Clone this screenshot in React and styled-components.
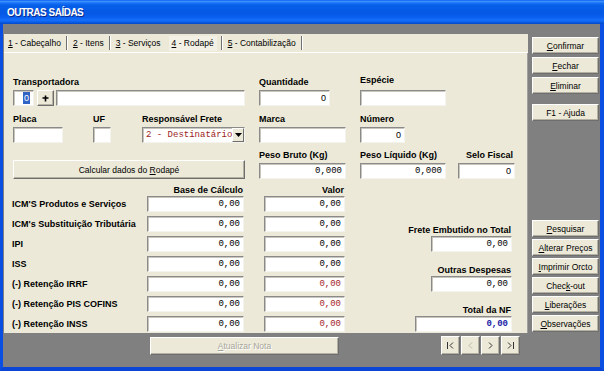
import React from 'react'
import styled, { createGlobalStyle } from 'styled-components'

const Global = createGlobalStyle`
  html, body { margin: 0; padding: 0; background: #808080; }
  * { box-sizing: border-box; }
`

const Window = styled.div`
  width: 604px;
  height: 371px;
  display: flex;
  flex-direction: column;
  font-family: "Liberation Sans", Arial, sans-serif;
  color: #000;
  overflow: hidden;
`

const TitleBar = styled.div`
  height: 24px;
  flex: none;
  display: flex;
  align-items: center;
  padding-left: 7px;
  background: linear-gradient(to bottom, #0a5ef0 0%, #3d92ff 6%, #1a74f6 12%, #065fe8 22%, #0558e4 55%, #0a5ff0 72%, #1670fb 84%, #0a5ee8 92%, #0447c8 100%);
  color: #fff;
  font-weight: 700;
  font-size: 10px;
  letter-spacing: -0.5px;
  text-shadow: 1px 1px 0 #0a2a8a;
`

const Frame = styled.div`
  flex: 1;
  display: flex;
  flex-direction: column;
  background: #808080;
  border-left: 3px solid #0b4ee2;
  border-right: 4px solid #0b4ee2;
  border-bottom: 4px solid #0a45d6;
  padding-top: 10px;
`

const TopArea = styled.div`
  display: flex;
  gap: 4px;
  padding-left: 1px;
`

const LeftCol = styled.div`
  width: 524px;
  display: flex;
  flex-direction: column;
`

const TabStrip = styled.div`
  height: 19px;
  background: #ece9d8;
  border-bottom: 1px solid #ffffff;
  display: flex;
  align-items: center;
  padding-left: 1px;
  font-size: 8.5px;
`

const Tab = styled.div`
  padding: 0 3px;
  height: 15px;
  line-height: 15px;
  white-space: pre;
  background: ${p => (p.$active ? '#f3f1e6' : 'transparent')};
  margin: ${p => (p.$active ? '0 2px 0 5px' : '0')};
  u { text-decoration: underline; }
`

const TabSep = styled.div`
  width: 2px;
  height: 14px;
  margin: 0 2px;
  border-left: 1px solid #707070;
  border-right: 1px solid #ffffff;
`

const Panel = styled.div`
  height: 280px;
  background: #ece9d8;
  border-right: 1px solid #a0a0a0;
  padding: 21px 0 0 9px;
  overflow: hidden;
`

const Row = styled.div`
  display: flex;
  align-items: flex-end;
  margin-top: ${p => p.$mt || 0}px;
`

const Cell = styled.div`
  width: ${p => p.$w}px;
  margin-left: ${p => p.$ml || 0}px;
  flex: none;
  display: flex;
  flex-direction: column;
  gap: 2px;
  align-items: ${p => (p.$right ? 'flex-end' : 'stretch')};
`

const Label = styled.div`
  height: 12px;
  line-height: 12px;
  font-size: 9px;
  font-weight: 700;
  white-space: nowrap;
  padding-right: ${p => (p.$pr ? p.$pr : 0)}px;
`

const Box = styled.div`
  width: ${p => (p.$w ? `${p.$w}px` : '100%')};
  height: 16px;
  flex: none;
  background: #fff;
  border: 1px solid;
  border-color: #8a8a8a #f4f3ee #f4f3ee #8a8a8a;
  box-shadow: inset 1px 1px 0 #c8c6bc;
  display: flex;
  align-items: center;
  justify-content: flex-end;
  padding-right: 3px;
  margin-top: ${p => p.$mt || 0}px;
  font-family: ${p => (p.$mono ? '"Liberation Mono", "Courier New", monospace' : '"Liberation Sans", Arial, sans-serif')};
  font-size: 9px;
  font-weight: ${p => (p.$bold ? 700 : 400)};
  color: ${p => p.$color || '#000'};
  white-space: nowrap;
  overflow: hidden;
`

const Selected = styled.span`
  background: #3163c5;
  color: #fff;
  padding: 0 1px;
  line-height: 12px;
`

const InlineRow = styled.div`
  display: flex;
  align-items: center;
  gap: ${p => p.$gap || 0}px;
`

const RaisedButton = styled.div`
  width: ${p => (p.$w ? `${p.$w}px` : '100%')};
  height: ${p => p.$h || 17}px;
  flex: none;
  background: #ece9d8;
  border: 1px solid;
  border-color: #ffffff #6e6e6e #6e6e6e #ffffff;
  box-shadow: inset -1px -1px 0 #b4b1a3;
  display: flex;
  align-items: center;
  justify-content: center;
  font-size: 8.5px;
  white-space: pre;
  color: ${p => (p.$disabled ? '#a7a59a' : '#000')};
  text-shadow: ${p => (p.$disabled ? '1px 1px 0 #ffffff' : 'none')};
  u { text-decoration: underline; }
`

const Select = styled.div`
  width: 103px;
  height: 16px;
  background: #fff;
  border: 1px solid;
  border-color: #8a8a8a #f4f3ee #f4f3ee #8a8a8a;
  box-shadow: inset 1px 1px 0 #c8c6bc;
  display: flex;
  align-items: center;
  justify-content: space-between;
  padding-left: 3px;
  font-family: "Liberation Mono", "Courier New", monospace;
  font-size: 9px;
  color: #9b1c1c;
  white-space: nowrap;
`

const DropButton = styled.div`
  width: 13px;
  height: 14px;
  background: #ece9d8;
  border: 1px solid;
  border-color: #ffffff #6e6e6e #6e6e6e #ffffff;
  display: flex;
  align-items: center;
  justify-content: center;
`

const Grid = styled.div`
  display: grid;
  grid-template-columns: 135px 97px 20px 81px 70px 97px;
  grid-template-rows: 13px repeat(7, 20px);
  margin-top: 4px;
  margin-left: -1px;
`

const GridLabel = styled.div`
  grid-column: ${p => p.$col};
  grid-row: ${p => p.$row};
  align-self: ${p => (p.$end ? 'end' : 'start')};
  justify-self: ${p => (p.$right ? 'end' : 'start')};
  height: ${p => (p.$end ? 12 : 16)}px;
  line-height: ${p => (p.$end ? 12 : 16)}px;
  font-size: 9px;
  font-weight: 700;
  white-space: nowrap;
  padding-right: ${p => (p.$right ? 1 : 0)}px;
`

const GridBox = styled(Box)`
  grid-column: ${p => p.$col};
  grid-row: ${p => p.$row};
  justify-self: end;
`

const RightCol = styled.div`
  width: 67px;
  height: 299px;
  display: flex;
  flex-direction: column;
  padding: 3px 0 1px;
`

const ButtonGroup = styled.div`
  display: flex;
  flex-direction: column;
  gap: ${p => p.$gap}px;
  margin-top: ${p => (p.$auto ? 'auto' : `${p.$mt || 0}px`)};
`

const BottomBar = styled.div`
  display: flex;
  align-items: center;
  margin-top: 3px;
  padding-left: 147px;
`

const NavGroup = styled.div`
  display: flex;
  gap: 1px;
  margin-left: 102px;
`

const NavButton = styled(RaisedButton)`
  width: 19px;
  height: 19px;
`

function NavIcon({ kind, disabled }) {
  const c = disabled ? '#b9b7ab' : '#333'
  return (
    <svg width="9" height="9" viewBox="0 0 9 9">
      {kind === 'first' && <path d="M1.5 1 V8 M7 1.5 L4 4.5 L7 7.5" stroke={c} fill="none" strokeWidth="1" />}
      {kind === 'prev' && <path d="M6 1.5 L3 4.5 L6 7.5" stroke={c} fill="none" strokeWidth="1" />}
      {kind === 'next' && <path d="M3 1.5 L6 4.5 L3 7.5" stroke={c} fill="none" strokeWidth="1" />}
      {kind === 'last' && <path d="M2 1.5 L5 4.5 L2 7.5 M7.5 1 V8" stroke={c} fill="none" strokeWidth="1" />}
    </svg>
  )
}

const tabs = [
  { n: '1', t: ' - Cabeçalho' },
  { n: '2', t: ' - Itens' },
  { n: '3', t: ' - Serviços' },
  { n: '4', t: ' - Rodapé', active: true },
  { n: '5', t: ' - Contabilização' },
]

const impostos = [
  { label: "ICM'S Produtos e Serviços" },
  { label: "ICM's Substituição Tributária" },
  { label: 'IPI' },
  { label: 'ISS' },
  { label: '(-) Retenção IRRF', red: true },
  { label: '(-) Retenção PIS COFINS', red: true },
  { label: '(-) Retenção INSS', red: true },
]

function Btn({ pre = '', u, post = '', ...rest }) {
  return (
    <RaisedButton {...rest}>
      <span>
        {pre}
        {u && <u>{u}</u>}
        {post}
      </span>
    </RaisedButton>
  )
}

export default function App() {
  return (
    <Window>
      <Global />
      <TitleBar>OUTRAS SAÍDAS</TitleBar>
      <Frame>
        <TopArea>
          <LeftCol>
            <TabStrip>
              {tabs.map((tab, i) => (
                <React.Fragment key={tab.n}>
                  <Tab $active={tab.active}>
                    <u>{tab.n}</u>
                    {tab.t}
                  </Tab>
                  {!(tabs[i + 1] && tabs[i + 1].active) && !tab.active ? <TabSep /> : null}
                  {tab.active ? <TabSep /> : null}
                </React.Fragment>
              ))}
            </TabStrip>
            <Panel>
              <Row>
                <Cell $w={232}>
                  <Label>Transportadora</Label>
                  <InlineRow>
                    <Box $w={21}>
                      <Selected>0</Selected>
                    </Box>
                    <RaisedButton $w={17} $h={16} style={{ marginLeft: 3 }}>
                      <svg width="7" height="7" viewBox="0 0 7 7">
                        <path d="M3.5 0.5 V6.5 M0.5 3 H6.5" stroke="#000" strokeWidth="1.6" />
                      </svg>
                    </RaisedButton>
                    <Box $w={189} style={{ marginLeft: 2 }} />
                  </InlineRow>
                </Cell>
                <Cell $w={87} $ml={14}>
                  <Label>Quantidade</Label>
                  <Box $w={71}>0</Box>
                </Cell>
                <Cell $w={86} $ml={14}>
                  <Label>Espécie</Label>
                  <Box $w={86} $mt={2} />
                </Cell>
              </Row>

              <Row $mt={7}>
                <Cell $w={232}>
                  <InlineRow $gap={0} style={{ alignItems: 'flex-end' }}>
                    <Cell $w={50}>
                      <Label>Placa</Label>
                      <Box />
                    </Cell>
                    <Cell $w={18} $ml={30}>
                      <Label>UF</Label>
                      <Box />
                    </Cell>
                    <Cell $w={103} $ml={31}>
                      <Label>Responsável Frete</Label>
                      <Select>
                        2 - Destinatário
                        <DropButton>
                          <svg width="7" height="4" viewBox="0 0 7 4">
                            <path d="M0 0 H7 L3.5 4 Z" fill="#000" />
                          </svg>
                        </DropButton>
                      </Select>
                    </Cell>
                  </InlineRow>
                </Cell>
                <Cell $w={87} $ml={14}>
                  <Label>Marca</Label>
                  <Box />
                </Cell>
                <Cell $w={86} $ml={14}>
                  <Label>Número</Label>
                  <Box $w={45}>0</Box>
                </Cell>
              </Row>

              <Row $mt={6}>
                <Cell $w={232}>
                  <Btn $h={19} pre="Calcular dados do " u="R" post="odapé" />
                </Cell>
                <Cell $w={87} $ml={14}>
                  <Label>Peso Bruto (Kg)</Label>
                  <Box $mono>0,000</Box>
                </Cell>
                <Cell $w={86} $ml={14}>
                  <Label>Peso Líquido (Kg)</Label>
                  <Box $mono>0,000</Box>
                </Cell>
                <Cell $w={57} $ml={12} $right>
                  <Label $pr={2}>Selo Fiscal</Label>
                  <Box $w={57}>0</Box>
                </Cell>
              </Row>

              <Grid>
                <GridLabel $col={2} $row={1} $right $end>Base de Cálculo</GridLabel>
                <GridLabel $col={4} $row={1} $right $end>Valor</GridLabel>
                {impostos.map((imp, i) => (
                  <React.Fragment key={imp.label}>
                    <GridLabel $col={1} $row={i + 2}>{imp.label}</GridLabel>
                    <GridBox $col={2} $row={i + 2} $w={97} $mono>0,00</GridBox>
                    <GridBox $col={4} $row={i + 2} $w={81} $mono $color={imp.red ? '#a3252b' : '#000'}>0,00</GridBox>
                  </React.Fragment>
                ))}
                <GridLabel $col={6} $row={3} $right $end>Frete Embutido no Total</GridLabel>
                <GridBox $col={6} $row={4} $w={81} $mono>0,00</GridBox>
                <GridLabel $col={6} $row={5} $right $end>Outras Despesas</GridLabel>
                <GridBox $col={6} $row={6} $w={81} $mono>0,00</GridBox>
                <GridLabel $col={6} $row={7} $right $end>Total da NF</GridLabel>
                <GridBox $col={6} $row={8} $w={97} $mono $bold $color="#1a1aa6">0,00</GridBox>
              </Grid>
            </Panel>
          </LeftCol>

          <RightCol>
            <ButtonGroup $gap={3}>
              <Btn u="C" post="onfirmar" />
              <Btn u="F" post="echar" />
              <Btn u="E" post="liminar" />
            </ButtonGroup>
            <ButtonGroup $gap={3} $mt={10}>
              <Btn pre="F1 - Ajuda" />
            </ButtonGroup>
            <ButtonGroup $gap={2} $auto>
              <Btn u="P" post="esquisar" />
              <Btn u="A" post="lterar Preços" />
              <Btn u="I" post="mprimir Orcto" />
              <Btn pre="Chec" u="k" post="-out" />
              <Btn u="L" post="iberações" />
              <Btn u="O" post="bservações" />
            </ButtonGroup>
          </RightCol>
        </TopArea>

        <BottomBar>
          <Btn $w={189} $h={18} $disabled u="A" post="tualizar Nota" />
          <NavGroup>
            <NavButton><NavIcon kind="first" /></NavButton>
            <NavButton><NavIcon kind="prev" disabled /></NavButton>
            <NavButton><NavIcon kind="next" /></NavButton>
            <NavButton><NavIcon kind="last" /></NavButton>
          </NavGroup>
        </BottomBar>
      </Frame>
    </Window>
  )
}
